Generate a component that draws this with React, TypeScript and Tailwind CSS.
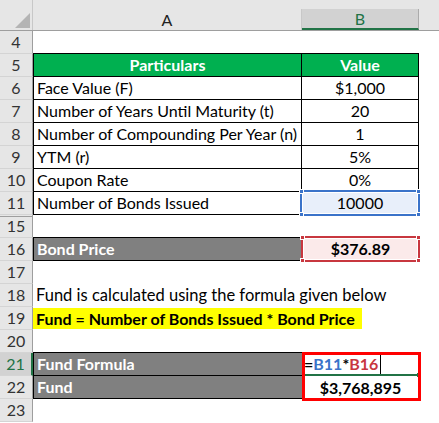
import React from "react";

const font = { fontFamily: "Lato, 'Open Sans', sans-serif" };

function RowHead({ n, active, split }: { n: number; active?: boolean; split?: boolean }) {
  return (
    <div
      className={
        "relative flex h-full w-[33px] shrink-0 items-center justify-center border-b border-r border-b-[#d4d4d4] border-r-[#9e9e9e] text-[16px] " +
        (active ? "border-r-2 border-r-[#217346] bg-[#d2d2d2] text-[#217346]" : "bg-[#e6e6e6] text-[#333]")
      }
    >
      {split && <div className="absolute left-0 right-0 top-[1px] h-px bg-[#9e9e9e]" />}
      {n}
    </div>
  );
}

function Handles({ color }: { color: string }) {
  return (
    <>
      <div className={"absolute -left-[3px] -top-[3px] h-[5px] w-[5px] border border-white " + color} />
      <div className={"absolute -right-[3px] -top-[3px] h-[5px] w-[5px] border border-white " + color} />
      <div className={"absolute -bottom-[3px] -left-[3px] h-[5px] w-[5px] border border-white " + color} />
      <div className={"absolute -bottom-[3px] -right-[3px] h-[5px] w-[5px] border border-white " + color} />
    </>
  );
}

function Row({ children, n, active, split }: { children?: React.ReactNode; n: number; active?: boolean; split?: boolean }) {
  return (
    <div className="flex h-[23px]">
      <RowHead n={n} active={active} split={split} />
      {children}
    </div>
  );
}

const tableRows = [
  { n: 6, label: "Face Value (F)", value: "$1,000" },
  { n: 7, label: "Number of Years Until Maturity (t)", value: "20" },
  { n: 8, label: "Number of Compounding Per Year (n)", value: "1" },
  { n: 9, label: "YTM (r)", value: "5%" },
  { n: 10, label: "Coupon Rate", value: "0%" },
];

export default function App() {
  return (
    <div className="h-[423px] w-[439px] overflow-hidden bg-white text-[16px] leading-none text-black" style={font}>
      {/* column headers */}
      <div className="flex h-[31px] border-b border-[#9e9e9e] bg-[#e6e6e6]">
        <div className="relative w-[33px] shrink-0 border-r border-[#c8c8c8]">
          <svg className="absolute left-[15px] top-[13px]" width="15" height="15" viewBox="0 0 15 15">
            <polygon points="15,0 15,15 0,15" fill="#b4b4b4" />
          </svg>
        </div>
        <div className="mt-[9px] flex w-[269px] items-center justify-center border-r border-[#c8c8c8] text-[16px] text-[#222]">
          A
        </div>
        <div className="mt-[9px] flex w-[117px] items-center justify-center border-b-2 border-r border-b-[#217346] border-r-[#ababab] bg-[#d2d2d2] text-[16px] text-[#217346]">
          B
        </div>
      </div>

      <Row n={4}>
        <div className="w-[269px] border-b border-black" />
        <div className="w-[117px] border-b border-black" />
      </Row>

      <Row n={5}>
        <div className="flex w-[269px] items-center justify-center border-b border-l border-r border-black bg-[#00b050] font-bold text-white">
          Particulars
        </div>
        <div className="flex w-[117px] items-center justify-center border-b border-r border-black bg-[#00b050] font-bold text-white">
          Value
        </div>
      </Row>

      {tableRows.map((r) => (
        <Row key={r.n} n={r.n}>
          <div className="flex w-[269px] items-center whitespace-nowrap border-b border-l border-r border-black pl-[3px]">
            {r.label}
          </div>
          <div className="flex w-[117px] items-center justify-center border-b border-r border-black">{r.value}</div>
        </Row>
      ))}

      <Row n={11}>
        <div className="flex w-[269px] items-center border-b border-l border-r border-black pl-[3px]">
          Number of Bonds Issued
        </div>
        <div className="relative flex w-[117px] items-center justify-center border-b border-r border-black">
          <div className="absolute -left-[2px] -top-[2px] bottom-[-2px] right-[-2px] border-2 border-[#3a73c9] bg-[#e8effa] outline outline-1 -outline-offset-[3px] outline-white">
            <Handles color="bg-[#3a73c9]" />
          </div>
          <span className="relative">10000</span>
        </div>
      </Row>

      <Row n={15} split>
        <div className="w-[269px] border-b border-black" />
        <div className="w-[117px] border-b border-black" />
      </Row>

      <Row n={16}>
        <div className="flex w-[269px] items-center border-b border-l border-black bg-[#808080] pl-[3px] font-bold text-white">
          Bond Price
        </div>
        <div className="relative flex w-[117px] items-center justify-center border-b border-l border-r border-black font-bold">
          <div className="absolute -left-[2px] -top-[2px] bottom-[-2px] right-[-2px] border-2 border-[#c8373f] bg-[#fbeaea] outline outline-1 -outline-offset-[3px] outline-white">
            <Handles color="bg-[#c8373f]" />
          </div>
          <span className="relative">$376.89</span>
        </div>
      </Row>

      <Row n={17} />

      <Row n={18}>
        <div className="flex items-center whitespace-nowrap pl-[3px] text-[16.5px]">Fund is calculated using the formula given below</div>
      </Row>

      <Row n={19}>
        <div className="my-[1px] flex w-[329px] items-center whitespace-nowrap bg-[#ffff00] pl-[3px] font-bold">
          Fund = Number of Bonds Issued * Bond Price
        </div>
      </Row>

      <Row n={20}>
        <div className="w-[269px] border-b border-black" />
        <div className="w-[117px] border-b border-black" />
      </Row>

      <Row n={21} active>
        <div className="flex w-[269px] items-center border-b border-l border-black bg-[#808080] pl-[3px] font-bold text-white">
          Fund Formula
        </div>
        <div className="relative flex w-[117px] items-center border-b-2 border-b-[#217346] pl-[2px] font-bold">
          <span>=</span>
          <span className="text-[#3a73c9]">B11</span>
          <span>*</span>
          <span className="text-[#c8373f]">B16</span>
          <span className="ml-[2px] h-[21px] w-px bg-black" />
          <div className="absolute -right-[2px] bottom-[-3px] h-[4px] w-[4px] bg-[#217346]" />
          <div className="pointer-events-none absolute left-0 top-[-1px] h-[49px] w-[119px] border-[3px] border-[#ff0000]" />
        </div>
      </Row>

      <Row n={22}>
        <div className="flex w-[269px] items-center border-b border-l border-black bg-[#808080] pl-[3px] font-bold text-white">
          Fund
        </div>
        <div className="flex w-[117px] items-center justify-center font-bold">$3,768,895</div>
      </Row>

      <Row n={23} />
    </div>
  );
}
